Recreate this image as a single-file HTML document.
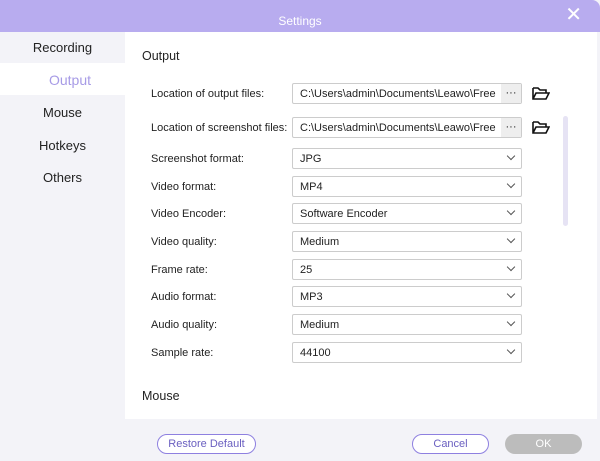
<!DOCTYPE html>
<html><head><style>
*{box-sizing:border-box;margin:0;padding:0}
body{width:600px;height:461px;overflow:hidden;background:#f3f3f8;font-family:"Liberation Sans",sans-serif;position:relative;color:#222}
.title{position:absolute;left:0;top:0;width:600px;height:32px;background:#b8acef;border-top-right-radius:8px;color:#fff;font-size:12px;text-align:center;line-height:43px}
.x{position:absolute;right:18px;top:6px;color:#fff;font-size:20px;line-height:18px}
.nav{position:absolute;left:0;width:125px;text-align:center;font-size:13px;color:#222}
.content{position:absolute;left:125px;top:32px;width:472px;height:387px;background:#fff}
.h{position:absolute;left:142px;font-size:12.5px}
.lab{position:absolute;left:151px;font-size:11px}
.box{position:absolute;left:292px;width:230px;height:21px;border:1px solid #ccc;border-radius:2px;font-size:11px;line-height:21px;padding-left:7px;background:#fff}
.box .ch{position:absolute;right:7px;top:4px;width:6px;height:6px;border-right:1px solid #555;border-bottom:1px solid #555;transform:rotate(45deg)}
.dots{position:absolute;right:0;top:0;width:20px;height:19px;background:#eee;text-align:center;font-size:11px;line-height:18px}
.btn{position:absolute;top:434px;height:20px;border-radius:10px;font-size:11px;text-align:center;line-height:19px}
</style></head><body>
<div class="title">Settings<span class="x">✕</span></div>
<div style="position:absolute;left:0;top:63px;width:125px;height:32px;background:#fff"></div>
<div class="nav" style="top:40px">Recording</div>
<div class="nav" style="top:72px;color:#a79be6;font-size:14px;padding-left:15px">Output</div>
<div class="nav" style="top:105px">Mouse</div>
<div class="nav" style="top:138px">Hotkeys</div>
<div class="nav" style="top:170px">Others</div>
<div class="content"></div>
<div style="position:absolute;left:563px;top:116px;width:5px;height:110px;background:#e6e3f4;border-radius:3px"></div>
<div class="h" style="top:49px">Output</div>
<div class="h" style="top:389px">Mouse</div>
<div class="lab" style="top:88px">Location of output files:</div>
<div class="box" style="top:83px">C:\Users\admin\Documents\Leawo\Free<span class="dots">···</span></div>
<div class="lab" style="top:122px">Location of screenshot files:</div>
<div class="box" style="top:117px">C:\Users\admin\Documents\Leawo\Free<span class="dots">···</span></div>
<svg style="position:absolute;left:532px;top:86px" width="18" height="15" viewBox="0 0 18 15"><path d="M1 2h5l2 2h6v3M1 2v11h13l3-6H4L1 13" fill="none" stroke="#111" stroke-width="1.6"/></svg>
<svg style="position:absolute;left:532px;top:120px" width="18" height="15" viewBox="0 0 18 15"><path d="M1 2h5l2 2h6v3M1 2v11h13l3-6H4L1 13" fill="none" stroke="#111" stroke-width="1.6"/></svg>
<div class="lab" style="top:153px">Screenshot format:</div><div class="box" style="top:148px">JPG<i class="ch"></i></div>
<div class="lab" style="top:181px">Video format:</div><div class="box" style="top:176px">MP4<i class="ch"></i></div>
<div class="lab" style="top:208px">Video Encoder:</div><div class="box" style="top:203px">Software Encoder<i class="ch"></i></div>
<div class="lab" style="top:236px">Video quality:</div><div class="box" style="top:231px">Medium<i class="ch"></i></div>
<div class="lab" style="top:264px">Frame rate:</div><div class="box" style="top:259px">25<i class="ch"></i></div>
<div class="lab" style="top:291px">Audio format:</div><div class="box" style="top:286px">MP3<i class="ch"></i></div>
<div class="lab" style="top:319px">Audio quality:</div><div class="box" style="top:314px">Medium<i class="ch"></i></div>
<div class="lab" style="top:347px">Sample rate:</div><div class="box" style="top:342px">44100<i class="ch"></i></div>
<div class="btn" style="left:157px;width:99px;border:1px solid #8e80e0;color:#6a5fc0;background:#fff">Restore Default</div>
<div class="btn" style="left:412px;width:77px;border:1px solid #8e80e0;color:#6a5fc0;background:#fff">Cancel</div>
<div class="btn" style="left:505px;width:77px;background:#bcbcbc;color:#fff;line-height:20px">OK</div>
</body></html>
